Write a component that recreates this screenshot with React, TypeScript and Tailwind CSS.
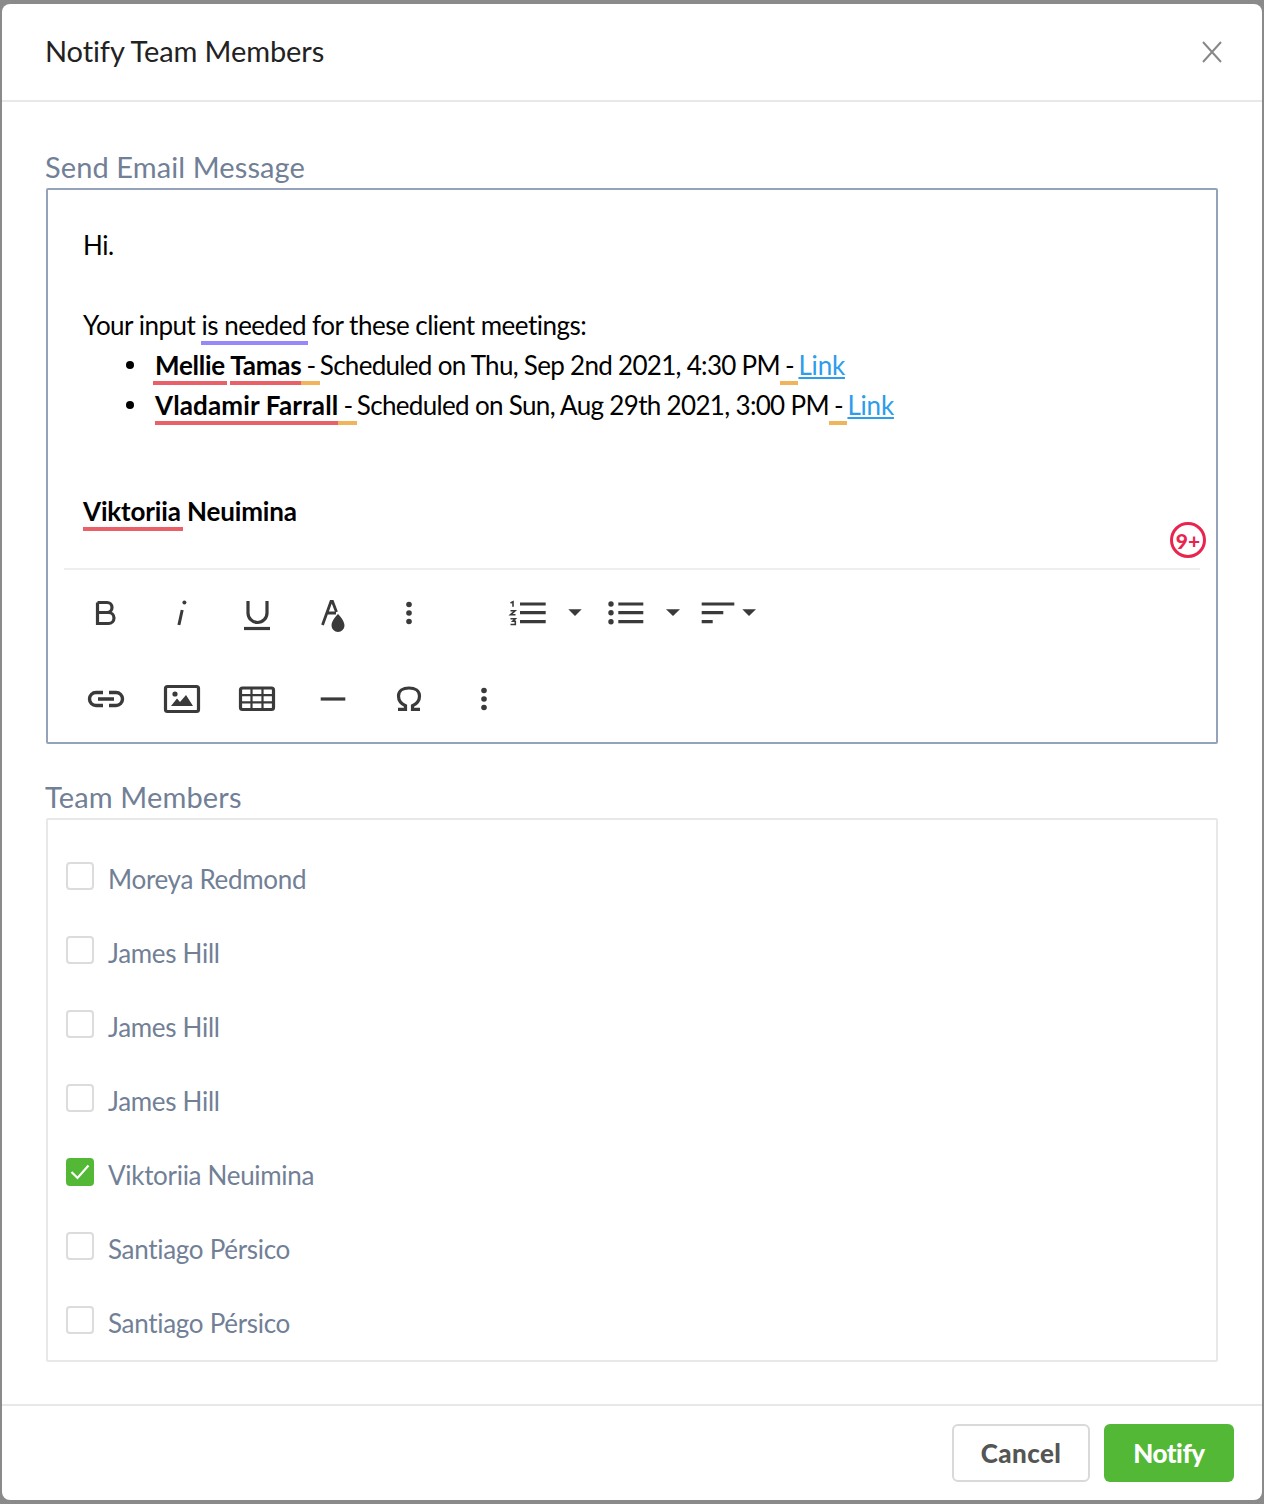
const members = [
  { name: 'Moreya Redmond', checked: false },
  { name: 'James Hill', checked: false },
  { name: 'James Hill', checked: false },
  { name: 'James Hill', checked: false },
  { name: 'Viktoriia Neuimina', checked: true },
  { name: 'Santiago Pérsico', checked: false },
  { name: 'Santiago Pérsico', checked: false },
]

const ink = '#3a3a3a'

function Icon({ children }: { children: React.ReactNode }) {
  return (
    <div className="flex h-[86px] w-[75.6px] shrink-0 items-center justify-center">
      <svg width="40" height="40" viewBox="0 0 40 40" fill="none" stroke={ink} strokeWidth="3.2">
        {children}
      </svg>
    </div>
  )
}

function Dots() {
  return (
    <Icon>
      <circle cx="20" cy="11.5" r="2.8" fill={ink} stroke="none" />
      <circle cx="20" cy="20" r="2.8" fill={ink} stroke="none" />
      <circle cx="20" cy="28.5" r="2.8" fill={ink} stroke="none" />
    </Icon>
  )
}

function Toolbar() {
  return (
    <div className="pl-[20.4px]">
      <div className="flex items-center">
        <Icon>
          <path d="M11.5 9.5v21h11a5.5 5.5 0 0 0 0-11h-11m0 0h9.5a5 5 0 0 0 0-10h-9.5" />
        </Icon>
        <Icon>
          <circle cx="22.4" cy="9.5" r="2" fill={ink} stroke="none" />
          <path d="M20.2 17l-3.3 15" strokeWidth="3" />
        </Icon>
        <Icon>
          <path d="M11 8v12a9.5 9.5 0 0 0 19 0V8" />
          <path d="M7 35.5h26" />
        </Icon>
        <Icon>
          <path d="M9.5 32L18 8.5h1.5L23.5 19M14 20h9" strokeWidth="2.8" />
          <path d="M25 21c0 0 6.5 6 6.5 11.5a6.5 6.5 0 0 1-13 0C18.5 27 25 21 25 21z" fill={ink} stroke="none" />
        </Icon>
        <Dots />
        <svg className="ml-[53.6px]" width="90" height="40" viewBox="0 0 90 40" fill={ink} stroke={ink}>
          <path d="M20 11h25.7M20 19.7h25.7M20 28.7h25.7" strokeWidth="3.2" />
          <path d="M10.5 10l2.5-1.3v5M10.5 17.8h4.5l-4.5 4h5M10.5 25.8h4.8l-2.5 2.4h2.5v3.3h-4.8" fill="none" strokeWidth="1.6" />
          <path d="M68.3 16.3h13.4L75 23z" stroke="none" />
        </svg>
        <svg className="ml-[10px]" width="90" height="40" viewBox="0 0 90 40" fill={ink} stroke={ink}>
          <path d="M18.3 11h25M18.3 19.7h25M18.3 28.7h25" strokeWidth="3.2" />
          <circle cx="11" cy="11" r="2.7" stroke="none" />
          <circle cx="11" cy="19.7" r="2.7" stroke="none" />
          <circle cx="11" cy="28.7" r="2.7" stroke="none" />
          <path d="M66 16.3h14L73 23z" stroke="none" />
        </svg>
        <svg className="ml-[6px]" width="70" height="40" viewBox="0 0 70 40" fill={ink} stroke={ink}>
          <path d="M5.7 11h32.6M5.7 19.7h21.6M5.7 28.7h11" strokeWidth="3.2" />
          <path d="M46.3 16.3h13.7L53 23z" stroke="none" />
        </svg>
      </div>
      <div className="flex items-center">
        <Icon>
          <path d="M17 13.5h-7a6.5 6.5 0 0 0 0 13h7M23 13.5h7a6.5 6.5 0 0 1 0 13h-7M12 20h16" strokeWidth="3.4" />
        </Icon>
        <Icon>
          <rect x="3.5" y="7.5" width="33" height="25" rx="2" />
          <circle cx="13" cy="15" r="2.6" fill={ink} stroke="none" />
          <path d="M9 27l6-7.5 3 3.5 6-7 7 11z" fill={ink} stroke="none" />
        </Icon>
        <Icon>
          <rect x="3.5" y="9" width="33" height="21.5" rx="2" />
          <path d="M3.5 16.2h33M3.5 23.4h33M14.5 9v21.5M25.5 9v21.5" strokeWidth="2.2" />
        </Icon>
        <Icon>
          <path d="M7.7 20h24.6" />
        </Icon>
        <Icon>
          <path d="M9 30.3h7.5v-3.5C11.5 24.5 9.5 20.5 9.5 17c0-5 4.5-8 10.5-8s10.5 3 10.5 8c0 3.5-2 7.5-7 9.8v3.5H31" />
        </Icon>
        <Dots />
      </div>
    </div>
  )
}

function Checkbox({ checked }: { checked: boolean }) {
  if (checked) {
    return (
      <span className="flex h-[28px] w-[28px] items-center justify-center rounded-[4px] bg-[#52b836]">
        <svg width="20" height="16" viewBox="0 0 20 16" fill="none" stroke="#fff" strokeWidth="2.2">
          <path d="M1.5 8l6 6L18.5 1.5" />
        </svg>
      </span>
    )
  }
  return <span className="h-[28px] w-[28px] rounded-[4px] border-2 border-[#dcdcdc] bg-white" />
}

function Bullet() {
  return <span className="mr-[21px] h-[8px] w-[8px] shrink-0 rounded-full bg-black" />
}

export default function App() {
  return (
    <div
      className="h-[1504px] w-[1264px] bg-[#8a8a8a] px-[2px] pt-[4px] text-[26px] text-black"
      style={{ fontFamily: 'Lato, "Noto Sans", sans-serif' }}
    >
      <div className="flex h-[1496px] flex-col rounded-[8px] bg-white">
        {/* Header */}
        <div className="flex h-[98px] shrink-0 items-center justify-between border-b-2 border-[#e8e8e8] pl-[44px] pr-[40px]">
          <h1 className="relative -left-[1px] -top-[1px] text-[29px] font-normal tracking-[-0.1px] text-[#222]">Notify Team Members</h1>
          <svg width="20" height="22" viewBox="0 0 20 22" fill="none" stroke="#888" strokeWidth="2">
            <path d="M1 1l18 20M19 1L1 21" />
          </svg>
        </div>

        {/* Body */}
        <div className="flex-1 px-[44px] pt-[46px]">
          <div className="mb-[2px] -ml-[1px] h-[38px] text-[29px] leading-[38px] tracking-[0.1px] text-[#718096]">Send Email Message</div>
          <div className="relative h-[556px] rounded-[2px] border-2 border-[#94a3bb]">
            <div className="h-[378px] pl-[35px] pt-[35px] leading-[40px]">
              <div className="tracking-[-0.5px]">Hi.</div>
              <div className="h-[40px]" />
              <div className="tracking-[-0.5px]">
                Your input <span className="-mr-[2px] border-b-[4px] border-[#9688fb] pr-[2px]">is needed</span> for these client meetings:
              </div>
              <ul className="pl-[43px]">
                <li className="flex items-center">
                  <Bullet />
                  <div className="tracking-[-0.7px]">
                    <b className="tracking-[-0.25px]">
                      <span className="-mx-[2px] border-b-[4px] border-[#ea6068] px-[2px]">Mellie</span>{' '}
                      <span className="border-b-[4px] border-[#ea6068]">Tamas</span>
                    </b>
                    <span className="border-b-[4px] border-[#f0b45c] tracking-[-1.5px]"> - </span>Scheduled on Thu, Sep 2nd 2021, 4:30 PM
                    <span className="border-b-[4px] border-[#f0b45c] tracking-[-1.5px]"> - </span>
                    <span className="tracking-[-0.2px] text-[#2d9cea] underline">Link</span>
                  </div>
                </li>
                <li className="flex items-center">
                  <Bullet />
                  <div className="tracking-[-0.67px]">
                    <b className="tracking-[0.15px]">
                      <span className="border-b-[4px] border-[#ea6068]">Vladamir Farrall</span>
                    </b>
                    <span className="border-b-[4px] border-[#f0b45c] tracking-[-1.5px]"> - </span>Scheduled on Sun, Aug 29th 2021, 3:00 PM
                    <span className="border-b-[4px] border-[#f0b45c] tracking-[-1.5px]"> - </span>
                    <span className="tracking-[-0.2px] text-[#2d9cea] underline">Link</span>
                  </div>
                </li>
              </ul>
              <div className="mt-[66px] font-bold tracking-[-0.15px]">
                <span className="-mr-[2px] border-b-[4px] border-[#ea6068] pr-[2px]">Viktoriia</span> Neuimina
              </div>
            </div>
            <div className="absolute right-[10px] top-[332px] flex h-[36px] w-[36px] items-center justify-center rounded-full border-[3px] border-[#e8244f] text-[21px] font-black leading-none text-[#e8244f]">
              9<span className="font-bold">+</span>
            </div>
            <div className="mx-[16px] h-[2px] bg-[#eeeeee]" />
            <Toolbar />
          </div>

          <div className="-ml-[1px] mb-[3px] mt-[34px] h-[37px] text-[29px] leading-[37px] tracking-[0.15px] text-[#718096]">Team Members</div>
          <div className="flex h-[544px] flex-col gap-[46px] rounded-[2px] border-2 border-[#e8e8e8] pl-[18px] pt-[42px]">
            {members.map((m, i) => (
              <label key={i} className="flex h-[28px] items-center gap-[14px]">
                <Checkbox checked={m.checked} />
                <span className="relative top-[3px] tracking-[-0.3px] text-[#718096]">{m.name}</span>
              </label>
            ))}
          </div>
        </div>

        {/* Footer */}
        <div className="flex h-[96px] shrink-0 items-start justify-end gap-[14px] border-t-2 border-[#e8e8e8] pr-[28px] pt-[18px]">
          <button className="h-[58px] w-[138px] rounded-[6px] border-2 border-[#d9d9d9] bg-white text-[26px] font-black tracking-[0.4px] text-[#555]">
            Cancel
          </button>
          <button className="h-[58px] w-[130px] rounded-[6px] bg-[#52b836] text-[26px] font-black tracking-[-0.5px] text-white">
            Notify
          </button>
        </div>
      </div>
    </div>
  )
}
